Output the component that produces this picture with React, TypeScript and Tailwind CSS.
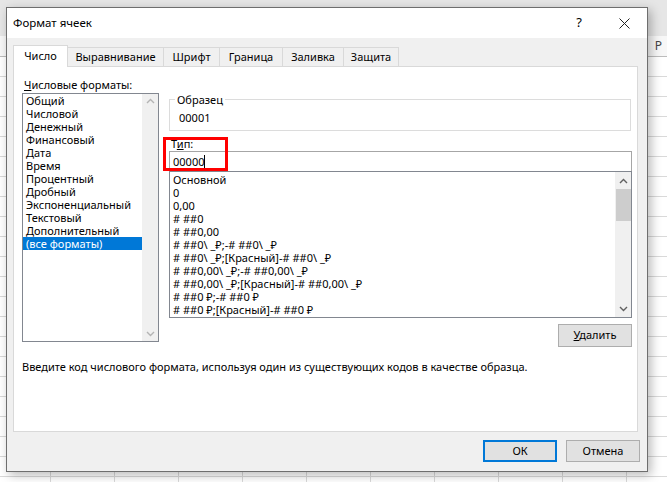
import React from 'react';

const categories = [
  'Общий',
  'Числовой',
  'Денежный',
  'Финансовый',
  'Дата',
  'Время',
  'Процентный',
  'Дробный',
  'Экспоненциальный',
  'Текстовый',
  'Дополнительный',
  '(все форматы)',
];

const formats = [
  'Основной',
  '0',
  '0,00',
  '# ##0',
  '# ##0,00',
  '# ##0\\ _₽;-# ##0\\ _₽',
  '# ##0\\ _₽;[Красный]-# ##0\\ _₽',
  '# ##0,00\\ _₽;-# ##0,00\\ _₽',
  '# ##0,00\\ _₽;[Красный]-# ##0,00\\ _₽',
  '# ##0 ₽;-# ##0 ₽',
  '# ##0 ₽;[Красный]-# ##0 ₽',
];

const cols = [51, 64, 64, 64, 64, 64, 64, 64, 64, 64, 64];

function Chevron({ up, color }: { up?: boolean; color: string }) {
  return (
    <svg width="9" height="6" viewBox="0 0 9 6" className="block">
      <path
        d={up ? 'M1 5 L4.5 1.5 L8 5' : 'M1 1 L4.5 4.5 L8 1'}
        fill="none"
        stroke={color}
        strokeWidth="1.4"
      />
    </svg>
  );
}

function SheetBackground() {
  return (
    <div className="flex flex-col">
      <div className="h-[36px] bg-[#e6e6e6]" />
      <div className="flex h-[21px] border-b border-[#bcbcbc] bg-[#f7f7f7]">
        {cols.map((w, i) => (
          <div
            key={i}
            style={{ width: w }}
            className="shrink-0 border-r border-[#d4d4d4] flex items-center justify-center text-[12px] text-[#444]"
          >
            {i === 10 ? 'P' : ''}
          </div>
        ))}
      </div>
      {Array.from({ length: 22 }).map((_, r) => (
        <div key={r} className="flex h-[20px] border-b border-[#d9d9d9] bg-white">
          {cols.map((w, i) => (
            <div key={i} style={{ width: w }} className="shrink-0 border-r border-[#d9d9d9]" />
          ))}
        </div>
      ))}
    </div>
  );
}

export default function App() {
  return (
    <div className="relative w-[667px] h-[482px] overflow-hidden bg-white font-['Noto_Sans',sans-serif] text-[11px] text-black">
      <SheetBackground />

      {/* Dialog window */}
      <div className="absolute left-[6px] top-[7px] w-[642px] h-[465px] border border-[#6e6e6e] bg-[#f0f0f0] shadow-[3px_3px_10px_rgba(0,0,0,0.28)] flex flex-col">
        {/* Title bar */}
        <div className="h-[30px] bg-white flex items-center">
          <div className="pl-[6px] flex-1 text-[11.5px]">Формат ячеек</div>
          <div className="w-[46px] h-full flex items-center justify-center text-[13px]">?</div>
          <div className="w-[45px] h-full flex items-center justify-center">
            <svg width="11" height="11" viewBox="0 0 11 11">
              <path d="M0.5 0.5 L10.5 10.5 M10.5 0.5 L0.5 10.5" stroke="#222" strokeWidth="1" />
            </svg>
          </div>
        </div>

        {/* Tabs */}
        <div className="mt-[7px] pl-[6px] flex items-end h-[22px] relative z-10">
          <div className="w-[55px] h-[22px] bg-white border border-b-0 border-[#d9d9d9] flex items-center justify-center">
            Число
          </div>
          {[
            ['Выравнивание', 'w-[96px]'],
            ['Шрифт', 'w-[56px]'],
            ['Граница', 'w-[63px]'],
            ['Заливка', 'w-[61px]'],
            ['Защита', 'w-[55px]'],
          ].map(([t, w]) => (
            <div
              key={t}
              className={`${w} h-[19px] mb-[1px] border border-l-0 border-b-0 border-[#d9d9d9] flex items-center justify-center`}
            >
              {t}
            </div>
          ))}
        </div>

        {/* Panel */}
        <div className="ml-[6px] -mt-[1px] w-[625px] h-[366px] bg-white border border-[#d9d9d9] flex flex-col pl-[8px]">
          <div className="flex">
            {/* Left column */}
            <div className="pt-[10px] flex flex-col">
              <div className="h-[15px] leading-[15px] ml-[2px]">
                <span className="underline">Ч</span>исловые форматы:
              </div>
              <div className="mt-[1px] w-[137px] h-[249px] border border-[#828790] flex">
                <div className="flex-1">
                  {categories.map((c, i) => (
                    <div
                      key={c}
                      className={`h-[13px] leading-[13px] pl-[3px] whitespace-nowrap ${
                        i === categories.length - 1 ? 'bg-[#0078d7] text-white' : ''
                      }`}
                    >
                      {c}
                    </div>
                  ))}
                </div>
                <div className="w-[16px] bg-[#f0f0f0] flex flex-col items-center justify-between py-[4px]">
                  <Chevron up color="#b4b4b4" />
                  <Chevron color="#b4b4b4" />
                </div>
              </div>
            </div>

            {/* Right column */}
            <div className="ml-[10px] pt-[25px] w-[463px] flex flex-col">
              <fieldset className="w-[462px] border border-[#dcdcdc] px-[8px] pb-[5px] pt-[3px]">
                <legend className="px-[2px] -ml-[3px] leading-[15px]">Образец</legend>
                <div className="leading-[15px] pl-[1px]">00001</div>
              </fieldset>
              <div className="mt-[5px] ml-[2px] h-[15px] leading-[15px]">
                Т<span className="underline">и</span>п:
              </div>
              <div className="h-[20px] w-[463px] border border-b-0 border-[#a6a6a6] flex items-center pl-[3px]">
                <span className="leading-[15px]">00000</span>
                <span className="w-px h-[14px] bg-black" />
              </div>
              <div className="w-[463px] h-[147px] border border-[#828790] flex">
                <div className="flex-1 pt-[1px] overflow-hidden">
                  {formats.map((f) => (
                    <div key={f} className="h-[13px] leading-[13px] pl-[3px] whitespace-nowrap">
                      {f}
                    </div>
                  ))}
                </div>
                <div className="w-[16px] bg-[#f0f0f0] flex flex-col items-center">
                  <div className="h-[17px] flex items-center">
                    <Chevron up color="#606060" />
                  </div>
                  <div className="w-[15px] h-[32px] bg-[#cdcdcd]" />
                  <div className="flex-1" />
                  <div className="h-[17px] flex items-center">
                    <Chevron color="#606060" />
                  </div>
                </div>
              </div>
              <div className="mt-[6px] self-end w-[74px] h-[23px] bg-[#e1e1e1] border border-[#adadad] flex items-center justify-center">
                <span>
                  <span className="underline">У</span>далить
                </span>
              </div>
            </div>
          </div>

          <div className="mt-[12px] leading-[15px] whitespace-nowrap">
            Введите код числового формата, используя один из существующих кодов в качестве образца.
          </div>
        </div>

        {/* Bottom buttons */}
        <div className="mt-[8px] flex justify-end gap-[9px] pr-[7px]">
          <div className="w-[74px] h-[22px] bg-[#e1e1e1] border-2 border-[#0078d7] flex items-center justify-center">
            ОК
          </div>
          <div className="w-[74px] h-[22px] bg-[#e1e1e1] border border-[#adadad] flex items-center justify-center">
            Отмена
          </div>
        </div>
      </div>

      {/* Red highlight annotation */}
      <div className="absolute left-[163px] top-[137px] w-[65px] h-[34px] border-[3px] border-[#ff0000]" />
    </div>
  );
}
